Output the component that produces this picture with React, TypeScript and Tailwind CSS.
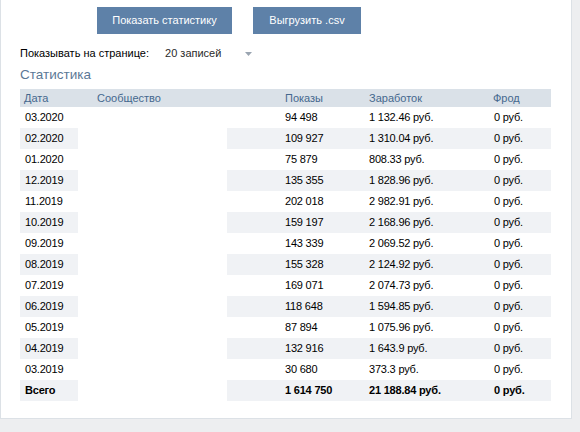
import React from "react";

const rows: [string, string, string][] = [
  ["03.2020", "94 498", "1 132.46 руб."],
  ["02.2020", "109 927", "1 310.04 руб."],
  ["01.2020", "75 879", "808.33 руб."],
  ["12.2019", "135 355", "1 828.96 руб."],
  ["11.2019", "202 018", "2 982.91 руб."],
  ["10.2019", "159 197", "2 168.96 руб."],
  ["09.2019", "143 339", "2 069.52 руб."],
  ["08.2019", "155 328", "2 124.92 руб."],
  ["07.2019", "169 071", "2 074.73 руб."],
  ["06.2019", "118 648", "1 594.85 руб."],
  ["05.2019", "87 894", "1 075.96 руб."],
  ["04.2019", "132 916", "1 643.9 руб."],
  ["03.2019", "30 680", "373.3 руб."],
];

function Row({
  d,
  v,
  e,
  f,
  alt,
  bold,
}: {
  d: string;
  v: string;
  e: string;
  f: string;
  alt: boolean;
  bold?: boolean;
}) {
  const bg = alt ? "bg-[#f0f2f5]" : "bg-white";
  return (
    <div
      className={`flex h-[21px] items-center text-[11px] tracking-[-0.2px] text-[#000] ${
        bold ? "font-bold" : ""
      }`}
    >
      <div className={`w-[58px] h-full flex items-center pl-[5px] ${bg}`}>{d}</div>
      <div className="w-[149px] h-full bg-white" />
      <div className={`flex-1 h-full flex items-center ${bg}`}>
        <div className="w-[138px] pl-[58px]">{v}</div>
        <div className="w-[125px] pl-[4px]">{e}</div>
        <div className="pl-[4px]">{f}</div>
      </div>
    </div>
  );
}

export default function App() {
  return (
    <div
      className="w-[580px] h-[432px] bg-[#edeef0] overflow-hidden"
      style={{ fontFamily: '"Liberation Sans", Arial, sans-serif' }}
    >
      <div className="w-[572px] h-[419px] bg-white border-l border-r border-b border-[#dce1e6] pl-[19px] pt-[7px]">
        <div className="flex pl-[77px] gap-[21px]">
          <div className="w-[135px] h-[27px] bg-[#5e81a8] text-white text-[11px] flex items-center justify-center">
            Показать статистику
          </div>
          <div className="w-[108px] h-[27px] bg-[#5e81a8] text-white text-[11px] flex items-center justify-center">
            Выгрузить .csv
          </div>
        </div>
        <div className="flex items-center h-[16px] mt-[11px] text-[11px]">
          <span className="text-[#000]">Показывать на странице:</span>
          <span className="ml-[16px] text-[#2a2a2a]">20 записей</span>
          <svg width="7" height="4" viewBox="0 0 7 4" className="ml-[24px] mt-[2px]">
            <path d="M0 0 L7 0 L3.5 4 Z" fill="#9aa5b1" />
          </svg>
        </div>
        <div className="mt-[6px] h-[17px] flex items-center text-[13.5px] text-[#5b7896]">Статистика</div>
        <div className="w-[531px] mt-[5px]">
          <div className="flex h-[18px] items-center bg-[#dae1e8] text-[11px] text-[#45688e]">
            <div className="w-[58px] pl-[4px]">Дата</div>
            <div className="w-[149px] pl-[19px]">Сообщество</div>
            <div className="w-[138px] pl-[58px]">Показы</div>
            <div className="w-[125px] pl-[4px]">Заработок</div>
            <div className="pl-[3px]">Фрод</div>
          </div>
          {rows.map((r, i) => (
            <Row key={r[0]} d={r[0]} v={r[1]} e={r[2]} f="0 руб." alt={i % 2 === 1} />
          ))}
          <Row d="Всего" v="1 614 750" e="21 188.84 руб." f="0 руб." alt bold />
        </div>
      </div>
    </div>
  );
}
